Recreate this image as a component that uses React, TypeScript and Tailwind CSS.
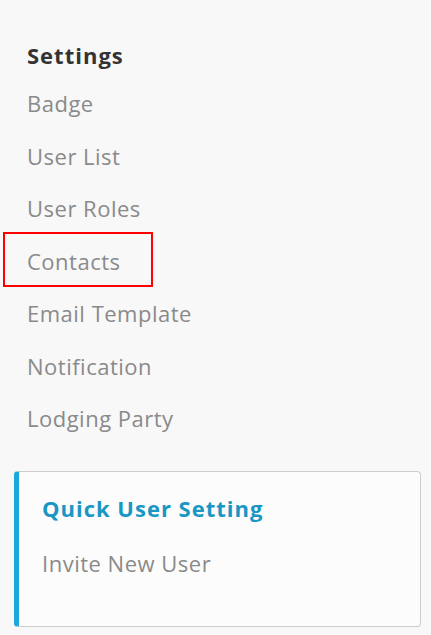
import React from 'react';

const items = ['Badge', 'User List', 'User Roles', 'Contacts', 'Email Template', 'Notification', 'Lodging Party'];

const App: React.FC = () => {
  return (
    <div className="min-h-[635px] w-[431px] bg-[#f8f8f8] font-['Open_Sans','Lato',sans-serif]">
      <div className="pt-[37px]">
        <h2 className="pl-[27px] text-[22px] leading-[36px] font-bold tracking-[1px] text-[#333333]">Settings</h2>
        <ul className="mt-[4px]">
          {items.map((item) => (
            <li key={item} className="flex">
              <span
                className={
                  'block pl-[22px] pr-[30px] text-[22px] leading-[48.5px] tracking-[0.5px] text-[#8a8a8a] border-2 ml-[3px] ' +
                  (item === 'Contacts' ? 'border-[#ff0000] -mt-[3px] pt-[3px] relative' : 'border-transparent')
                }
              >
                {item}
              </span>
            </li>
          ))}
        </ul>
      </div>
      <div className="mt-[26px] ml-[14px] mr-[10px] h-[156px] rounded-[4px] border border-[#cccccc] border-l-[5px] border-l-[#1ba8dc] bg-[#fcfcfc] pl-[23px] pt-[21px]">
        <h3 className="text-[22px] leading-[30px] font-bold tracking-[1px] text-[#1a96c4]">Quick User Setting</h3>
        <p className="mt-[25px] text-[22px] leading-[30px] tracking-[0.5px] text-[#8a8a8a]">Invite New User</p>
      </div>
    </div>
  );
};

export default App;
